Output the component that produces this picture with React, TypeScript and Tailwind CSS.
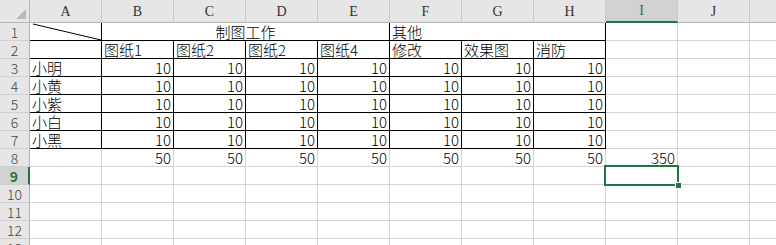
import type { ReactNode } from 'react';

const COLUMNS = ['A', 'B', 'C', 'D', 'E', 'F', 'G', 'H', 'I', 'J', 'K'];
const PEOPLE = ['小明', '小黄', '小紫', '小白', '小黑'];
const SUBTASKS = ['图纸1', '图纸2', '图纸2', '图纸4', '修改', '效果图', '消防'];

const cellFont = { fontFamily: '"Noto Sans CJK SC", "Noto Sans", sans-serif' };

type CellProps = {
  children?: ReactNode;
  align?: 'left' | 'right' | 'center';
  boxed?: boolean;
  span?: string;
  className?: string;
};

function Cell({ children, align = 'left', boxed = false, span = '', className = '' }: CellProps) {
  const justify = align === 'right' ? 'justify-end pr-[2px]' : align === 'center' ? 'justify-center' : 'justify-start pl-[2px]';
  return (
    <div
      className={`relative flex items-end whitespace-nowrap border-r border-b bg-white text-[15px] font-light leading-[16px] text-black ${
        boxed ? 'border-black' : 'border-[#d4d4d4]'
      } ${justify} ${span} ${className}`}
      style={cellFont}
    >
      {children}
    </div>
  );
}

function ColumnHeader({ label, active }: { label: string; active: boolean }) {
  return (
    <div
      className={`flex items-center justify-center border-r border-[#c8c8c8] text-[14px] ${
        active ? 'border-b-2 border-b-[#217346] bg-[#d2d2d2] text-[#217346]' : 'border-b border-b-[#b4b4b4] bg-[#e6e6e6] text-[#333]'
      }`}
      style={{ fontFamily: '"Liberation Serif", "DejaVu Serif", serif' }}
    >
      {label}
    </div>
  );
}

function RowHeader({ n, active }: { n: number; active: boolean }) {
  return (
    <div
      className={`flex items-end justify-center border-b border-[#d0d0d0] text-[14px] leading-[16px] ${
        active ? 'border-r-2 border-r-[#217346] bg-[#d2d2d2] font-bold text-[#217346]' : 'border-r border-r-[#b4b4b4] bg-[#e6e6e6] font-light text-[#444]'
      }`}
      style={cellFont}
    >
      {n}
    </div>
  );
}

export default function App() {
  const rows = Array.from({ length: 13 }, (_, i) => i + 1);

  const renderRow = (r: number) => {
    const out: ReactNode[] = [<RowHeader key={`h${r}`} n={r} active={r === 9} />];

    if (r === 1) {
      out.push(
        <Cell key="a1" boxed>
          <svg className="absolute inset-0" width="71" height="17">
            <line x1="3" y1="1" x2="71" y2="17" stroke="#000" strokeWidth="1" />
          </svg>
        </Cell>,
        <Cell key="b1" boxed align="center" span="col-span-4">
          制图工作
        </Cell>,
        <Cell key="f1" boxed span="col-span-3">
          其他
        </Cell>,
      );
      for (let c = 8; c < 11; c++) out.push(<Cell key={`1-${c}`} />);
      return out;
    }

    for (let c = 0; c < 11; c++) {
      const key = `${r}-${c}`;
      const inTable = r <= 7 && c <= 7;
      let content: ReactNode = null;
      let align: CellProps['align'] = 'left';

      if (r === 2 && c >= 1 && c <= 7) content = SUBTASKS[c - 1];
      if (r >= 3 && r <= 7) {
        if (c === 0) content = PEOPLE[r - 3];
        else if (c <= 7) {
          content = 10;
          align = 'right';
        }
      }
      if (r === 8 && c >= 1 && c <= 8) {
        content = c === 8 ? 350 : 50;
        align = 'right';
      }

      // active cell I9 with its fill handle
      if (r === 9 && c === 8) {
        out.push(
          <Cell key={key}>
            <div className="pointer-events-none absolute -left-[2px] -top-[2px] z-10 h-[21px] w-[75px] border-2 border-[#217346]" />
            <div className="absolute left-[69px] top-[15px] z-20 h-[7px] w-[7px] border border-white bg-[#217346]" />
          </Cell>,
        );
        continue;
      }

      out.push(
        <Cell key={key} boxed={inTable} align={align}>
          {content}
        </Cell>,
      );
    }
    return out;
  };

  return (
    <div className="h-[245px] w-[776px] overflow-hidden bg-white">
      <div className="grid grid-cols-[30px_repeat(11,72px)] grid-rows-[23px_repeat(13,18px)]">
        <div className="flex items-end justify-end border-r border-b border-[#b4b4b4] bg-[#e6e6e6] pb-[3px] pr-[3px]">
          <svg width="10" height="10">
            <polygon points="10,0 10,10 0,10" fill="#b9b9b9" />
          </svg>
        </div>
        {COLUMNS.map((c) => (
          <ColumnHeader key={c} label={c} active={c === 'I'} />
        ))}
        {rows.map((r) => renderRow(r))}
      </div>
    </div>
  );
}
